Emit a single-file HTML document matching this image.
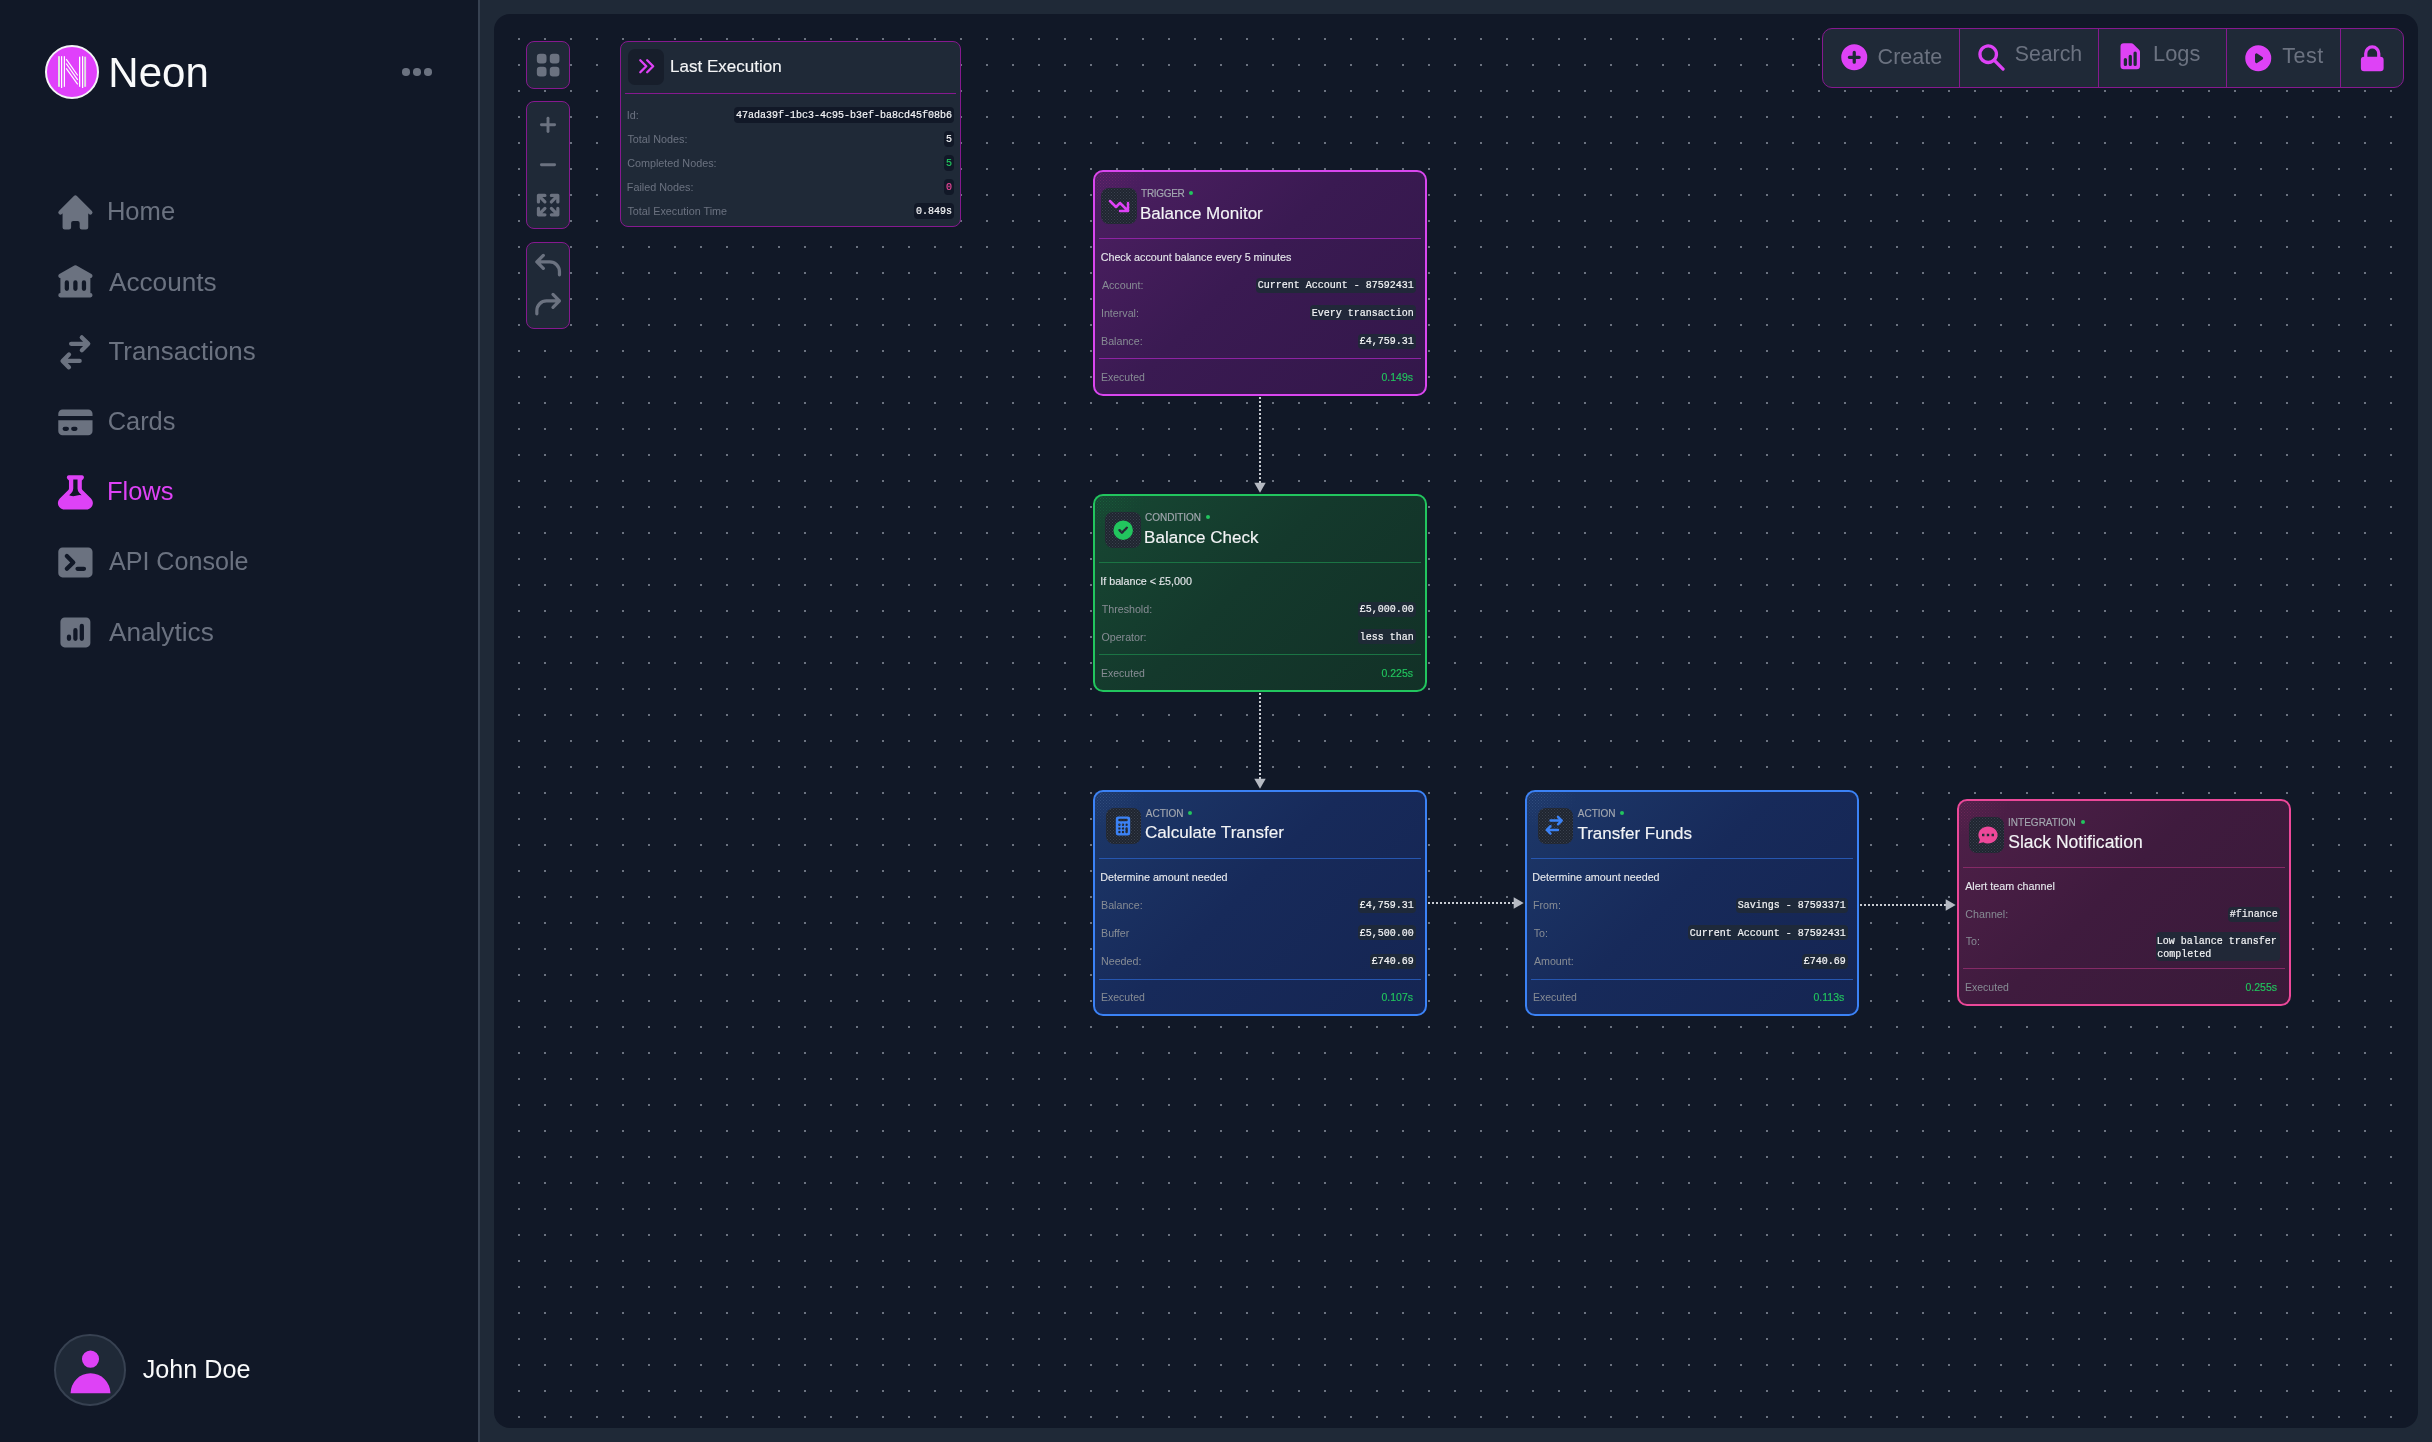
<!DOCTYPE html><html><head><meta charset="utf-8"><style>
html,body{margin:0;padding:0;width:2432px;height:1442px;overflow:hidden;background:#1f2937;}
body{position:relative;font-family:"Liberation Sans",sans-serif;}
#root{position:absolute;left:0;top:0;width:2432px;height:1442px;will-change:transform;}
.t{position:absolute;white-space:pre;}
</style></head><body><div id="root">
<div style="position:absolute;left:0px;top:0px;width:480px;height:1442px;box-sizing:border-box;background:#111827;border-right:2px solid #374151;"></div>
<div style="position:absolute;left:45px;top:45px;width:54px;height:54px;box-sizing:border-box;border-radius:50%;background:#e040fb;border:2px solid #f3f4f6;"></div>
<svg style="position:absolute;left:45px;top:45px" width="54" height="54" viewBox="0 0 54 54"><g fill="#ffffff"><rect x="13" y="11.2" width="2" height="30.6" fill="#dfe3e1"/><rect x="16" y="11.2" width="1.2" height="31.8"/><rect x="18.8" y="11.2" width="1.2" height="30.6"/><rect x="34" y="11.7" width="1.3" height="30.1"/><rect x="37" y="11.2" width="1.2" height="31.8"/><rect x="39.2" y="11.7" width="1.9" height="30.1" fill="#dfe3e1"/></g><g stroke="#ffffff" stroke-width="1.2"><line x1="21.2" y1="14.1" x2="32.7" y2="30.5"/><line x1="21.2" y1="18.5" x2="32.7" y2="34.9"/><line x1="21.2" y1="23.4" x2="32.7" y2="39.4"/></g></svg>
<div class="t" style="left:108.35px;top:52.13px;font-size:42px;line-height:42px;color:#f9fafb;font-weight:400;font-family:'Liberation Sans', sans-serif;">Neon</div>
<div style="position:absolute;left:402.25px;top:68.25px;width:7.5px;height:7.5px;box-sizing:border-box;border-radius:50%;background:#6b7280;"></div>
<div style="position:absolute;left:413.25px;top:68.25px;width:7.5px;height:7.5px;box-sizing:border-box;border-radius:50%;background:#6b7280;"></div>
<div style="position:absolute;left:424.25px;top:68.25px;width:7.5px;height:7.5px;box-sizing:border-box;border-radius:50%;background:#6b7280;"></div>
<svg style="position:absolute;left:53.60px;top:191.30px;" width="42.80" height="42.80" viewBox="0 0 20 20" fill="#6b7280"><path fill-rule="evenodd" clip-rule="evenodd" d="M10.707 2.293a1 1 0 00-1.414 0l-7 7a1 1 0 001.414 1.414L4 10.414V17a1 1 0 001 1h2a1 1 0 001-1v-2a1 1 0 011-1h2a1 1 0 011 1v2a1 1 0 001 1h2a1 1 0 001-1v-6.586l.293.293a1 1 0 001.414-1.414l-7-7z"/></svg>
<div class="t" style="left:106.90px;top:199.02px;font-size:25.6px;line-height:25.6px;color:#6b7280;font-weight:400;font-family:'Liberation Sans', sans-serif;">Home</div>
<svg style="position:absolute;left:53.60px;top:261.30px;" width="42.80" height="42.80" viewBox="0 0 20 20" fill="#6b7280"><path fill-rule="evenodd" clip-rule="evenodd" d="M10.496 2.132a1 1 0 00-.992 0l-7 4A1 1 0 003 8v7a1 1 0 100 2h14a1 1 0 100-2V8a1 1 0 00.496-1.868l-7-4zM6 9a1 1 0 00-1 1v3a1 1 0 102 0v-3a1 1 0 00-1-1zm3 1a1 1 0 012 0v3a1 1 0 11-2 0v-3zm5-1a1 1 0 00-1 1v3a1 1 0 102 0v-3a1 1 0 00-1-1z"/></svg>
<div class="t" style="left:108.95px;top:268.51px;font-size:26.2px;line-height:26.2px;color:#6b7280;font-weight:400;font-family:'Liberation Sans', sans-serif;">Accounts</div>
<svg style="position:absolute;left:53.60px;top:331.30px;" width="42.80" height="42.80" viewBox="0 0 20 20" fill="#6b7280"><path fill-rule="evenodd" clip-rule="evenodd" d="M8 5a1 1 0 100 2h5.586l-1.293 1.293a1 1 0 001.414 1.414l3-3a1 1 0 000-1.414l-3-3a1 1 0 10-1.414 1.414L13.586 5H8zM12 15a1 1 0 100-2H6.414l1.293-1.293a1 1 0 10-1.414-1.414l-3 3a1 1 0 000 1.414l3 3a1 1 0 001.414-1.414L6.414 15H12z"/></svg>
<div class="t" style="left:108.42px;top:338.77px;font-size:25.9px;line-height:25.9px;color:#6b7280;font-weight:400;font-family:'Liberation Sans', sans-serif;">Transactions</div>
<svg style="position:absolute;left:53.60px;top:401.30px;" width="42.80" height="42.80" viewBox="0 0 20 20" fill="#6b7280"><path fill-rule="evenodd" clip-rule="evenodd" d="M4 4a2 2 0 00-2 2v1h16V6a2 2 0 00-2-2H4zM18 9H2v5a2 2 0 002 2h12a2 2 0 002-2V9zM4 13a1 1 0 011-1h1a1 1 0 110 2H5a1 1 0 01-1-1zm5-1a1 1 0 100 2h1a1 1 0 100-2H9z"/></svg>
<div class="t" style="left:107.71px;top:409.19px;font-size:25.4px;line-height:25.4px;color:#6b7280;font-weight:400;font-family:'Liberation Sans', sans-serif;">Cards</div>
<svg style="position:absolute;left:53.60px;top:471.30px;" width="42.80" height="42.80" viewBox="0 0 20 20" fill="#de42f6"><path fill-rule="evenodd" clip-rule="evenodd" d="M7 2a1 1 0 00-.707 1.707L7 4.414v3.758a1 1 0 01-.293.707l-4 4C.817 14.769 2.156 18 4.828 18h10.343c2.673 0 4.012-3.231 2.122-5.121l-4-4A1 1 0 0113 8.172V4.414l.707-.707A1 1 0 0013 2H7zm2 6.172V4h2v4.172a3 3 0 00.879 2.12l1.027 1.028a4 4 0 00-2.171.102l-.47.156a4 4 0 01-2.53 0l-.563-.187a1.993 1.993 0 00-.114-.035l1.063-1.063A3 3 0 009 8.172z"/></svg>
<div class="t" style="left:106.91px;top:479.11px;font-size:25.5px;line-height:25.5px;color:#de42f6;font-weight:400;font-family:'Liberation Sans', sans-serif;">Flows</div>
<svg style="position:absolute;left:53.60px;top:541.30px;" width="42.80" height="42.80" viewBox="0 0 20 20" fill="#6b7280"><path fill-rule="evenodd" clip-rule="evenodd" d="M2 5a2 2 0 012-2h12a2 2 0 012 2v10a2 2 0 01-2 2H4a2 2 0 01-2-2V5zm3.293 1.293a1 1 0 011.414 0l3 3a1 1 0 010 1.414l-3 3a1 1 0 01-1.414-1.414L7.586 10 5.293 7.707a1 1 0 010-1.414zM11 12a1 1 0 100 2h3a1 1 0 100-2h-3z"/></svg>
<div class="t" style="left:108.95px;top:549.45px;font-size:25.1px;line-height:25.1px;color:#6b7280;font-weight:400;font-family:'Liberation Sans', sans-serif;">API Console</div>
<svg style="position:absolute;left:53.60px;top:611.30px;" width="42.80" height="42.80" viewBox="0 0 20 20" fill="#6b7280"><path fill-rule="evenodd" clip-rule="evenodd" d="M5 3a2 2 0 00-2 2v10a2 2 0 002 2h10a2 2 0 002-2V5a2 2 0 00-2-2H5zm9 4a1 1 0 10-2 0v6a1 1 0 102 0V7zm-3 2a1 1 0 10-2 0v4a1 1 0 102 0V9zm-3 3a1 1 0 10-2 0v1a1 1 0 102 0v-1z"/></svg>
<div class="t" style="left:108.95px;top:618.51px;font-size:26.2px;line-height:26.2px;color:#6b7280;font-weight:400;font-family:'Liberation Sans', sans-serif;">Analytics</div>
<div style="position:absolute;left:54.3px;top:1334.3px;width:71.5px;height:71.5px;box-sizing:border-box;border-radius:50%;background:#1f2937;border:2px solid #374151;"></div>
<svg style="position:absolute;left:61.50px;top:1341.50px;" width="57.00" height="57.00" viewBox="0 0 20 20" fill="#de42f6"><path fill-rule="evenodd" clip-rule="evenodd" d="M10 9a3 3 0 100-6 3 3 0 000 6zm-7 9a7 7 0 1114 0H3z"/></svg>
<div class="t" style="left:142.71px;top:1356.56px;font-size:25.2px;line-height:25.2px;color:#f9fafb;font-weight:400;font-family:'Liberation Sans', sans-serif;">John Doe</div>
<div style="position:absolute;left:494px;top:14px;width:1924px;height:1414px;border-radius:16px;background:#111827;overflow:hidden"><svg width="1922" height="1414" style="position:absolute;left:0;top:0"><defs><pattern id="dots" x="0" y="0" width="26" height="26" patternUnits="userSpaceOnUse"><rect x="24" y="24" width="2" height="2" fill="#6b7280"/></pattern></defs><rect width="1922" height="1414" fill="url(#dots)"/></svg></div>
<div style="position:absolute;left:526px;top:41px;width:44px;height:48px;box-sizing:border-box;background:#1f2937;border:1.3px solid #86198f;border-radius:8px;"></div>
<svg style="position:absolute;left:531.85px;top:49.05px;" width="32.30" height="32.30" viewBox="0 0 20 20" fill="#6b7280"><path fill-rule="evenodd" clip-rule="evenodd" d="M5 3a2 2 0 00-2 2v2a2 2 0 002 2h2a2 2 0 002-2V5a2 2 0 00-2-2H5zM5 11a2 2 0 00-2 2v2a2 2 0 002 2h2a2 2 0 002-2v-2a2 2 0 00-2-2H5zM11 5a2 2 0 012-2h2a2 2 0 012 2v2a2 2 0 01-2 2h-2a2 2 0 01-2-2V5zM11 13a2 2 0 012-2h2a2 2 0 012 2v2a2 2 0 01-2 2h-2a2 2 0 01-2-2v-2z"/></svg>
<div style="position:absolute;left:526px;top:101px;width:44px;height:128px;box-sizing:border-box;background:#1f2937;border:1.3px solid #86198f;border-radius:8px;"></div>
<svg style="position:absolute;left:530px;top:110px" width="36" height="70" viewBox="530 110 36 70" stroke="#6b7280" stroke-width="2.9" stroke-linecap="round" fill="none"><line x1="541.4" y1="124.8" x2="554.6" y2="124.8"/><line x1="548" y1="118.2" x2="548" y2="131.5"/><line x1="541.4" y1="164.8" x2="554.6" y2="164.8"/></svg>
<svg style="position:absolute;left:531.85px;top:188.85px;" width="32.30" height="32.30" viewBox="0 0 20 20" fill="#6b7280"><path fill-rule="evenodd" clip-rule="evenodd" d="M3 4a1 1 0 011-1h4a1 1 0 010 2H6.414l2.293 2.293a1 1 0 01-1.414 1.414L5 6.414V8a1 1 0 01-2 0V4zm9 1a1 1 0 110-2h4a1 1 0 011 1v4a1 1 0 11-2 0V6.414l-2.293 2.293a1 1 0 11-1.414-1.414L13.586 5H12zm-9 7a1 1 0 112 0v1.586l2.293-2.293a1 1 0 011.414 1.414L6.414 15H8a1 1 0 110 2H4a1 1 0 01-1-1v-4zm13-1a1 1 0 011 1v4a1 1 0 01-1 1h-4a1 1 0 110-2h1.586l-2.293-2.293a1 1 0 011.414-1.414L15 13.586V12a1 1 0 011-1z"/></svg>
<div style="position:absolute;left:526px;top:241.5px;width:44px;height:87px;box-sizing:border-box;background:#1f2937;border:1.3px solid #86198f;border-radius:8px;"></div>
<svg style="position:absolute;left:531.85px;top:248.85px;" width="32.30" height="32.30" viewBox="0 0 20 20" fill="#6b7280"><path fill-rule="evenodd" clip-rule="evenodd" d="M7.707 3.293a1 1 0 010 1.414L5.414 7H11a7 7 0 017 7v2a1 1 0 11-2 0v-2a5 5 0 00-5-5H5.414l2.293 2.293a1 1 0 11-1.414 1.414l-4-4a1 1 0 010-1.414l4-4a1 1 0 011.414 0z"/></svg>
<svg style="position:absolute;left:531.85px;top:288.45px;transform:scaleX(-1);" width="32.30" height="32.30" viewBox="0 0 20 20" fill="#6b7280"><path fill-rule="evenodd" clip-rule="evenodd" d="M7.707 3.293a1 1 0 010 1.414L5.414 7H11a7 7 0 017 7v2a1 1 0 11-2 0v-2a5 5 0 00-5-5H5.414l2.293 2.293a1 1 0 11-1.414 1.414l-4-4a1 1 0 010-1.414l4-4a1 1 0 011.414 0z"/></svg>
<div style="position:absolute;left:620px;top:41px;width:341px;height:186px;box-sizing:border-box;background:#1f2937;border:1.3px solid #86198f;border-radius:8px;"></div>
<div style="position:absolute;left:628px;top:49px;width:35.5px;height:35.5px;box-sizing:border-box;background:#171e2b;border-radius:7px;"></div>
<svg style="position:absolute;left:635.70px;top:56.30px" width="20.60" height="20.60" viewBox="0 0 24 24" fill="none" stroke="#de42f6" stroke-width="2.7" stroke-linecap="round" stroke-linejoin="round"><path d="M13 5l7 7-7 7M5 5l7 7-7 7"/></svg>
<div class="t" style="left:670.11px;top:57.60px;font-size:17px;line-height:17px;color:#f3f4f6;font-weight:400;font-family:'Liberation Sans', sans-serif;-webkit-text-stroke:0.15px #f3f4f6;">Last Execution</div>
<div style="position:absolute;left:625px;top:93px;width:331px;height:1px;box-sizing:border-box;background:#86198f;"></div>
<div class="t" style="left:626.70px;top:110.15px;font-size:10.8px;line-height:10.8px;color:#6b7280;font-weight:400;font-family:'Liberation Sans', sans-serif;">Id:</div>
<div style="position:absolute;left:734.2px;top:107.3px;width:219.5px;height:15.5px;box-sizing:border-box;background:#111827;border-radius:4px;"></div>
<div class="t" style="left:735.91px;top:111.14px;font-size:10px;line-height:10px;color:#f3f4f6;font-weight:400;font-family:'Liberation Mono', monospace;-webkit-text-stroke:0.2px #f3f4f6;">47ada39f-1bc3-4c95-b3ef-ba8cd45f08b6</div>
<div class="t" style="left:627.46px;top:134.15px;font-size:10.8px;line-height:10.8px;color:#6b7280;font-weight:400;font-family:'Liberation Sans', sans-serif;">Total Nodes:</div>
<div style="position:absolute;left:944.2px;top:131.3px;width:9.5px;height:15.5px;box-sizing:border-box;background:#111827;border-radius:4px;"></div>
<div class="t" style="left:945.95px;top:135.14px;font-size:10px;line-height:10px;color:#f3f4f6;font-weight:400;font-family:'Liberation Mono', monospace;-webkit-text-stroke:0.2px #f3f4f6;">5</div>
<div class="t" style="left:627.15px;top:158.15px;font-size:10.8px;line-height:10.8px;color:#6b7280;font-weight:400;font-family:'Liberation Sans', sans-serif;">Completed Nodes:</div>
<div style="position:absolute;left:944.2px;top:155.3px;width:9.5px;height:15.5px;box-sizing:border-box;background:#111827;border-radius:4px;"></div>
<div class="t" style="left:945.95px;top:159.14px;font-size:10px;line-height:10px;color:#22c55e;font-weight:400;font-family:'Liberation Mono', monospace;-webkit-text-stroke:0.2px #22c55e;">5</div>
<div class="t" style="left:626.81px;top:182.15px;font-size:10.8px;line-height:10.8px;color:#6b7280;font-weight:400;font-family:'Liberation Sans', sans-serif;">Failed Nodes:</div>
<div style="position:absolute;left:944.2px;top:179.3px;width:9.5px;height:15.5px;box-sizing:border-box;background:#111827;border-radius:4px;"></div>
<div class="t" style="left:945.95px;top:183.14px;font-size:10px;line-height:10px;color:#ec4899;font-weight:400;font-family:'Liberation Mono', monospace;-webkit-text-stroke:0.2px #ec4899;">0</div>
<div class="t" style="left:627.46px;top:206.15px;font-size:10.8px;line-height:10.8px;color:#6b7280;font-weight:400;font-family:'Liberation Sans', sans-serif;">Total Execution Time</div>
<div style="position:absolute;left:914.2px;top:203.3px;width:39.5px;height:15.5px;box-sizing:border-box;background:#111827;border-radius:4px;"></div>
<div class="t" style="left:915.94px;top:207.14px;font-size:10px;line-height:10px;color:#f3f4f6;font-weight:400;font-family:'Liberation Mono', monospace;-webkit-text-stroke:0.2px #f3f4f6;">0.849s</div>
<div style="position:absolute;left:1822px;top:28px;width:582px;height:60px;box-sizing:border-box;background:#1f2937;border:1.3px solid #86198f;border-radius:10px;"></div>
<div style="position:absolute;left:1958.7px;top:28px;width:1.2px;height:60px;box-sizing:border-box;background:#86198f;"></div>
<div style="position:absolute;left:2097.7000000000003px;top:28px;width:1.2px;height:60px;box-sizing:border-box;background:#86198f;"></div>
<div style="position:absolute;left:2225.9px;top:28px;width:1.2px;height:60px;box-sizing:border-box;background:#86198f;"></div>
<div style="position:absolute;left:2339.9px;top:28px;width:1.2px;height:60px;box-sizing:border-box;background:#86198f;"></div>
<svg style="position:absolute;left:1837.75px;top:41.45px;" width="32.50" height="32.50" viewBox="0 0 20 20" fill="#de42f6"><path fill-rule="evenodd" clip-rule="evenodd" d="M10 18a8 8 0 100-16 8 8 0 000 16zm1-11a1 1 0 10-2 0v2H7a1 1 0 100 2h2v2a1 1 0 102 0v-2h2a1 1 0 100-2h-2V7z"/></svg>
<div class="t" style="left:1877.61px;top:46.99px;font-size:21.5px;line-height:21.5px;color:#6b7280;font-weight:400;font-family:'Liberation Sans', sans-serif;">Create</div>
<svg style="position:absolute;left:1974.50px;top:41.20px;" width="33.00" height="33.00" viewBox="0 0 20 20" fill="#de42f6"><path fill-rule="evenodd" clip-rule="evenodd" d="M8 4a4 4 0 100 8 4 4 0 000-8zM2 8a6 6 0 1110.89 3.476l4.817 4.817a1 1 0 01-1.414 1.414l-4.816-4.816A6 6 0 012 8z"/></svg>
<div class="t" style="left:2014.73px;top:43.56px;font-size:21.3px;line-height:21.3px;color:#6b7280;font-weight:400;font-family:'Liberation Sans', sans-serif;">Search</div>
<svg style="position:absolute;left:2113.85px;top:39.65px;" width="32.50" height="32.50" viewBox="0 0 20 20" fill="#de42f6"><path fill-rule="evenodd" clip-rule="evenodd" d="M6 2a2 2 0 00-2 2v12a2 2 0 002 2h8a2 2 0 002-2V7.414A2 2 0 0015.414 6L12 2.586A2 2 0 0010.586 2H6zm2 10a1 1 0 10-2 0v3a1 1 0 102 0v-3zm2-3a1 1 0 011 1v5a1 1 0 11-2 0v-5a1 1 0 011-1zm4-1a1 1 0 10-2 0v7a1 1 0 102 0V8z"/></svg>
<div class="t" style="left:2153.11px;top:42.74px;font-size:21.8px;line-height:21.8px;color:#6b7280;font-weight:400;font-family:'Liberation Sans', sans-serif;">Logs</div>
<svg style="position:absolute;left:2241.65px;top:42.05px;" width="32.50" height="32.50" viewBox="0 0 20 20" fill="#de42f6"><path fill-rule="evenodd" clip-rule="evenodd" d="M10 18a8 8 0 100-16 8 8 0 000 16zM9.555 7.168A1 1 0 008 8v4a1 1 0 001.555.832l3-2a1 1 0 000-1.664l-3-2z"/></svg>
<div class="t" style="left:2282.32px;top:46.39px;font-size:21.5px;line-height:21.5px;color:#6b7280;font-weight:400;font-family:'Liberation Sans', sans-serif;letter-spacing:0.5px;">Test</div>
<svg style="position:absolute;left:2355.75px;top:41.85px;" width="32.50" height="32.50" viewBox="0 0 20 20" fill="#de42f6"><path fill-rule="evenodd" clip-rule="evenodd" d="M5 9V7a5 5 0 0110 0v2a2 2 0 012 2v5a2 2 0 01-2 2H5a2 2 0 01-2-2v-5a2 2 0 012-2zm8-2v2H7V7a3 3 0 016 0z"/></svg>
<svg style="position:absolute;left:1254px;top:396px" width="12" height="98" viewBox="0 0 12 98"><line x1="6" y1="1" x2="6" y2="88" stroke="#c9ccd3" stroke-width="2" stroke-dasharray="2 2"/><path d="M0.3 86.7 L11.7 86.7 L6 96.8 Z" fill="#b6bac3"/></svg>
<svg style="position:absolute;left:1254px;top:692px" width="12" height="98" viewBox="0 0 12 98"><line x1="6" y1="1" x2="6" y2="88" stroke="#c9ccd3" stroke-width="2" stroke-dasharray="2 2"/><path d="M0.3 86.7 L11.7 86.7 L6 96.8 Z" fill="#b6bac3"/></svg>
<svg style="position:absolute;left:1427px;top:897px" width="98" height="12" viewBox="0 0 98 12"><line x1="1" y1="6" x2="88" y2="6" stroke="#c9ccd3" stroke-width="2" stroke-dasharray="2 2"/><path d="M86.7 0.3 L86.7 11.7 L96.7 6 Z" fill="#b6bac3"/></svg>
<svg style="position:absolute;left:1859px;top:899px" width="98" height="12" viewBox="0 0 98 12"><line x1="1" y1="6" x2="88" y2="6" stroke="#c9ccd3" stroke-width="2" stroke-dasharray="2 2"/><path d="M86.7 0.3 L86.7 11.7 L96.7 6 Z" fill="#b6bac3"/></svg>
<div style="position:absolute;left:1093px;top:170px;width:334px;height:226px;box-sizing:border-box;border:2px solid #d946ef;border-radius:10px;background:linear-gradient(135deg,#4d1f62 0%,#3a1a52 45%,#33174a 100%);"></div>
<svg style="position:absolute;left:1095px;top:172px" width="70" height="50" viewBox="0 0 70 50"><defs><pattern id="hp1093170" width="3" height="3" patternUnits="userSpaceOnUse"><circle cx="1" cy="1" r="0.55" fill="rgba(236,72,153,0.32)"/><circle cx="2.5" cy="2.5" r="0.55" fill="rgba(236,72,153,0.32)"/></pattern><radialGradient id="hg1093170" cx="0" cy="0" r="1" gradientUnits="objectBoundingBox"><stop offset="0" stop-color="#fff" stop-opacity="1"/><stop offset="0.75" stop-color="#fff" stop-opacity="0"/></radialGradient><mask id="hm1093170"><rect width="70" height="50" fill="url(#hg1093170)"/></mask></defs><rect width="70" height="50" fill="url(#hp1093170)" mask="url(#hm1093170)"/></svg>
<div style="position:absolute;left:1101px;top:188.3px;width:35.5px;height:35.5px;box-sizing:border-box;background-color:#1f2530;background-image:radial-gradient(rgba(120,130,145,0.30) 0.6px, transparent 0.9px),radial-gradient(rgba(120,130,145,0.30) 0.6px, transparent 0.9px);background-size:3px 3px;background-position:0 0,1.5px 1.5px;border-radius:8px;"></div>
<svg style="position:absolute;left:1106.75px;top:194.05px" width="24.00" height="24.00" viewBox="0 0 24 24" fill="none" stroke="#de42f6" stroke-width="2.5" stroke-linecap="round" stroke-linejoin="round"><path d="M13 17h8m0 0V9m0 8l-8-8-4 4-6-6"/></svg>
<div class="t" style="left:1141.08px;top:188.63px;font-size:10px;line-height:10px;color:#a3a8b0;font-weight:400;font-family:'Liberation Sans', sans-serif;letter-spacing:-0.3px;-webkit-text-stroke:0.15px #a3a8b0;">TRIGGER</div>
<div style="position:absolute;left:1189px;top:191px;width:4px;height:4px;box-sizing:border-box;border-radius:50%;background:#22c55e;"></div>
<div class="t" style="left:1139.91px;top:204.60px;font-size:17px;line-height:17px;color:#f3f4f6;font-weight:400;font-family:'Liberation Sans', sans-serif;-webkit-text-stroke:0.15px #f3f4f6;">Balance Monitor</div>
<div style="position:absolute;left:1099px;top:238px;width:322px;height:1px;box-sizing:border-box;background:#8e23a3;"></div>
<div class="t" style="left:1100.65px;top:251.90px;font-size:10.75px;line-height:10.75px;color:#e5e7eb;font-weight:400;font-family:'Liberation Sans', sans-serif;-webkit-text-stroke:0.12px #e5e7eb;">Check account balance every 5 minutes</div>
<div class="t" style="left:1101.88px;top:280.14px;font-size:10.7px;line-height:10.7px;color:#878c94;font-weight:400;font-family:'Liberation Sans', sans-serif;">Account:</div>
<div style="position:absolute;left:1256.1px;top:277.59999999999997px;width:159.5px;height:15px;box-sizing:border-box;background:rgba(31,41,55,0.92);border-radius:4px;"></div>
<div class="t" style="left:1257.82px;top:281.24px;font-size:10px;line-height:10px;color:#f3f4f6;font-weight:400;font-family:'Liberation Mono', monospace;-webkit-text-stroke:0.2px #f3f4f6;">Current Account - 87592431</div>
<div class="t" style="left:1100.91px;top:307.94px;font-size:10.7px;line-height:10.7px;color:#878c94;font-weight:400;font-family:'Liberation Sans', sans-serif;">Interval:</div>
<div style="position:absolute;left:1310.1px;top:305.4px;width:105.5px;height:15px;box-sizing:border-box;background:rgba(31,41,55,0.92);border-radius:4px;"></div>
<div class="t" style="left:1311.83px;top:309.04px;font-size:10px;line-height:10px;color:#f3f4f6;font-weight:400;font-family:'Liberation Mono', monospace;-webkit-text-stroke:0.2px #f3f4f6;">Every transaction</div>
<div class="t" style="left:1101.02px;top:336.14px;font-size:10.7px;line-height:10.7px;color:#878c94;font-weight:400;font-family:'Liberation Sans', sans-serif;">Balance:</div>
<div style="position:absolute;left:1358.1px;top:333.59999999999997px;width:57.5px;height:15px;box-sizing:border-box;background:rgba(31,41,55,0.92);border-radius:4px;"></div>
<div class="t" style="left:1359.84px;top:337.24px;font-size:10px;line-height:10px;color:#f3f4f6;font-weight:400;font-family:'Liberation Mono', monospace;-webkit-text-stroke:0.2px #f3f4f6;">£4,759.31</div>
<div style="position:absolute;left:1099px;top:358.2px;width:322px;height:1px;box-sizing:border-box;background:#8e23a3;"></div>
<div class="t" style="left:1101.04px;top:372.21px;font-size:10.5px;line-height:10.5px;color:#878c94;font-weight:400;font-family:'Liberation Sans', sans-serif;">Executed</div>
<div class="t" style="left:1381.47px;top:372.21px;font-size:10.5px;line-height:10.5px;color:#22c55e;font-weight:400;font-family:'Liberation Sans', sans-serif;-webkit-text-stroke:0.15px #22c55e;">0.149s</div>
<div style="position:absolute;left:1093px;top:494px;width:334px;height:198px;box-sizing:border-box;border:2px solid #22c55e;border-radius:10px;background:linear-gradient(135deg,#174733 0%,#14392c 45%,#123127 100%);"></div>
<svg style="position:absolute;left:1095px;top:496px" width="70" height="50" viewBox="0 0 70 50"><defs><pattern id="hp1093494" width="3" height="3" patternUnits="userSpaceOnUse"><circle cx="1" cy="1" r="0.55" fill="rgba(34,197,94,0.32)"/><circle cx="2.5" cy="2.5" r="0.55" fill="rgba(34,197,94,0.32)"/></pattern><radialGradient id="hg1093494" cx="0" cy="0" r="1" gradientUnits="objectBoundingBox"><stop offset="0" stop-color="#fff" stop-opacity="1"/><stop offset="0.75" stop-color="#fff" stop-opacity="0"/></radialGradient><mask id="hm1093494"><rect width="70" height="50" fill="url(#hg1093494)"/></mask></defs><rect width="70" height="50" fill="url(#hp1093494)" mask="url(#hm1093494)"/></svg>
<div style="position:absolute;left:1105.2px;top:512.3px;width:35.5px;height:35.5px;box-sizing:border-box;background-color:#1f2530;background-image:radial-gradient(rgba(120,130,145,0.30) 0.6px, transparent 0.9px),radial-gradient(rgba(120,130,145,0.30) 0.6px, transparent 0.9px);background-size:3px 3px;background-position:0 0,1.5px 1.5px;border-radius:8px;"></div>
<svg style="position:absolute;left:1110.75px;top:517.85px;" width="24.40" height="24.40" viewBox="0 0 20 20" fill="#22c55e"><path fill-rule="evenodd" clip-rule="evenodd" d="M10 18a8 8 0 100-16 8 8 0 000 16zm3.707-9.293a1 1 0 00-1.414-1.414L9 10.586 7.707 9.293a1 1 0 00-1.414 1.414l2 2a1 1 0 001.414 0l4-4z"/></svg>
<div class="t" style="left:1144.99px;top:512.63px;font-size:10px;line-height:10px;color:#a3a8b0;font-weight:400;font-family:'Liberation Sans', sans-serif;-webkit-text-stroke:0.15px #a3a8b0;">CONDITION</div>
<div style="position:absolute;left:1206px;top:515px;width:4px;height:4px;box-sizing:border-box;border-radius:50%;background:#22c55e;"></div>
<div class="t" style="left:1144.11px;top:528.60px;font-size:17px;line-height:17px;color:#f3f4f6;font-weight:400;font-family:'Liberation Sans', sans-serif;-webkit-text-stroke:0.15px #f3f4f6;">Balance Check</div>
<div style="position:absolute;left:1099px;top:562px;width:322px;height:1px;box-sizing:border-box;background:#1b7444;"></div>
<div class="t" style="left:1100.21px;top:575.90px;font-size:10.75px;line-height:10.75px;color:#e5e7eb;font-weight:400;font-family:'Liberation Sans', sans-serif;-webkit-text-stroke:0.12px #e5e7eb;">If balance &lt; £5,000</div>
<div class="t" style="left:1101.66px;top:604.04px;font-size:10.7px;line-height:10.7px;color:#878c94;font-weight:400;font-family:'Liberation Sans', sans-serif;">Threshold:</div>
<div style="position:absolute;left:1358.1px;top:601.5px;width:57.5px;height:15px;box-sizing:border-box;background:rgba(31,41,55,0.92);border-radius:4px;"></div>
<div class="t" style="left:1359.84px;top:605.14px;font-size:10px;line-height:10px;color:#f3f4f6;font-weight:400;font-family:'Liberation Mono', monospace;-webkit-text-stroke:0.2px #f3f4f6;">£5,000.00</div>
<div class="t" style="left:1101.39px;top:631.94px;font-size:10.7px;line-height:10.7px;color:#878c94;font-weight:400;font-family:'Liberation Sans', sans-serif;">Operator:</div>
<div style="position:absolute;left:1358.1px;top:629.4px;width:57.5px;height:15px;box-sizing:border-box;background:rgba(31,41,55,0.92);border-radius:4px;"></div>
<div class="t" style="left:1359.84px;top:633.04px;font-size:10px;line-height:10px;color:#f3f4f6;font-weight:400;font-family:'Liberation Mono', monospace;-webkit-text-stroke:0.2px #f3f4f6;">less than</div>
<div style="position:absolute;left:1099px;top:654.3px;width:322px;height:1px;box-sizing:border-box;background:#1b7444;"></div>
<div class="t" style="left:1101.04px;top:667.81px;font-size:10.5px;line-height:10.5px;color:#878c94;font-weight:400;font-family:'Liberation Sans', sans-serif;">Executed</div>
<div class="t" style="left:1381.47px;top:667.81px;font-size:10.5px;line-height:10.5px;color:#22c55e;font-weight:400;font-family:'Liberation Sans', sans-serif;-webkit-text-stroke:0.15px #22c55e;">0.225s</div>
<div style="position:absolute;left:1093px;top:790px;width:334px;height:226px;box-sizing:border-box;border:2px solid #3b82f6;border-radius:10px;background:linear-gradient(135deg,#1d3869 0%,#172a5a 45%,#152552 100%);"></div>
<svg style="position:absolute;left:1095px;top:792px" width="70" height="50" viewBox="0 0 70 50"><defs><pattern id="hp1093790" width="3" height="3" patternUnits="userSpaceOnUse"><circle cx="1" cy="1" r="0.55" fill="rgba(148,178,230,0.30)"/><circle cx="2.5" cy="2.5" r="0.55" fill="rgba(148,178,230,0.30)"/></pattern><radialGradient id="hg1093790" cx="0" cy="0" r="1" gradientUnits="objectBoundingBox"><stop offset="0" stop-color="#fff" stop-opacity="1"/><stop offset="0.75" stop-color="#fff" stop-opacity="0"/></radialGradient><mask id="hm1093790"><rect width="70" height="50" fill="url(#hg1093790)"/></mask></defs><rect width="70" height="50" fill="url(#hp1093790)" mask="url(#hm1093790)"/></svg>
<div style="position:absolute;left:1105.5px;top:808.3px;width:35.5px;height:35.5px;box-sizing:border-box;background-color:#1f2530;background-image:radial-gradient(rgba(120,130,145,0.30) 0.6px, transparent 0.9px),radial-gradient(rgba(120,130,145,0.30) 0.6px, transparent 0.9px);background-size:3px 3px;background-position:0 0,1.5px 1.5px;border-radius:8px;"></div>
<svg style="position:absolute;left:1111.25px;top:814.05px;" width="24.00" height="24.00" viewBox="0 0 20 20" fill="#3b82f6"><path fill-rule="evenodd" clip-rule="evenodd" d="M6 2a2 2 0 00-2 2v12a2 2 0 002 2h8a2 2 0 002-2V4a2 2 0 00-2-2H6zm1 2a1 1 0 000 2h6a1 1 0 100-2H7zm6 7a1 1 0 011 1v3a1 1 0 11-2 0v-3a1 1 0 011-1zm-3 3a1 1 0 100 2h.01a1 1 0 100-2H10zm-4 1a1 1 0 011-1h.01a1 1 0 110 2H7a1 1 0 01-1-1zm1-4a1 1 0 100 2h.01a1 1 0 100-2H7zm2 1a1 1 0 011-1h.01a1 1 0 110 2H10a1 1 0 01-1-1zm4-4a1 1 0 100 2h.01a1 1 0 100-2H13zM9 9a1 1 0 011-1h.01a1 1 0 110 2H10a1 1 0 01-1-1zM7 8a1 1 0 000 2h.01a1 1 0 000-2H7z"/></svg>
<div class="t" style="left:1145.78px;top:808.63px;font-size:10px;line-height:10px;color:#a3a8b0;font-weight:400;font-family:'Liberation Sans', sans-serif;-webkit-text-stroke:0.15px #a3a8b0;">ACTION</div>
<div style="position:absolute;left:1188.1px;top:811px;width:4px;height:4px;box-sizing:border-box;border-radius:50%;background:#22c55e;"></div>
<div class="t" style="left:1144.93px;top:824.48px;font-size:17.15px;line-height:17.15px;color:#f3f4f6;font-weight:400;font-family:'Liberation Sans', sans-serif;-webkit-text-stroke:0.15px #f3f4f6;">Calculate Transfer</div>
<div style="position:absolute;left:1099px;top:858px;width:322px;height:1px;box-sizing:border-box;background:#2656b0;"></div>
<div class="t" style="left:1100.32px;top:871.90px;font-size:10.75px;line-height:10.75px;color:#e5e7eb;font-weight:400;font-family:'Liberation Sans', sans-serif;-webkit-text-stroke:0.12px #e5e7eb;">Determine amount needed</div>
<div class="t" style="left:1101.02px;top:900.14px;font-size:10.7px;line-height:10.7px;color:#878c94;font-weight:400;font-family:'Liberation Sans', sans-serif;">Balance:</div>
<div style="position:absolute;left:1358.1px;top:897.6px;width:57.5px;height:15px;box-sizing:border-box;background:rgba(31,41,55,0.92);border-radius:4px;"></div>
<div class="t" style="left:1359.84px;top:901.24px;font-size:10px;line-height:10px;color:#f3f4f6;font-weight:400;font-family:'Liberation Mono', monospace;-webkit-text-stroke:0.2px #f3f4f6;">£4,759.31</div>
<div class="t" style="left:1101.02px;top:927.94px;font-size:10.7px;line-height:10.7px;color:#878c94;font-weight:400;font-family:'Liberation Sans', sans-serif;">Buffer</div>
<div style="position:absolute;left:1358.1px;top:925.4px;width:57.5px;height:15px;box-sizing:border-box;background:rgba(31,41,55,0.92);border-radius:4px;"></div>
<div class="t" style="left:1359.84px;top:929.04px;font-size:10px;line-height:10px;color:#f3f4f6;font-weight:400;font-family:'Liberation Mono', monospace;-webkit-text-stroke:0.2px #f3f4f6;">£5,500.00</div>
<div class="t" style="left:1101.02px;top:956.34px;font-size:10.7px;line-height:10.7px;color:#878c94;font-weight:400;font-family:'Liberation Sans', sans-serif;">Needed:</div>
<div style="position:absolute;left:1370.1px;top:953.8px;width:45.5px;height:15px;box-sizing:border-box;background:rgba(31,41,55,0.92);border-radius:4px;"></div>
<div class="t" style="left:1371.84px;top:957.44px;font-size:10px;line-height:10px;color:#f3f4f6;font-weight:400;font-family:'Liberation Mono', monospace;-webkit-text-stroke:0.2px #f3f4f6;">£740.69</div>
<div style="position:absolute;left:1099px;top:978.6px;width:322px;height:1px;box-sizing:border-box;background:#2656b0;"></div>
<div class="t" style="left:1101.04px;top:992.41px;font-size:10.5px;line-height:10.5px;color:#878c94;font-weight:400;font-family:'Liberation Sans', sans-serif;">Executed</div>
<div class="t" style="left:1381.47px;top:992.41px;font-size:10.5px;line-height:10.5px;color:#22c55e;font-weight:400;font-family:'Liberation Sans', sans-serif;-webkit-text-stroke:0.15px #22c55e;">0.107s</div>
<div style="position:absolute;left:1525px;top:790px;width:334px;height:226px;box-sizing:border-box;border:2px solid #3b82f6;border-radius:10px;background:linear-gradient(135deg,#1d3869 0%,#172a5a 45%,#152552 100%);"></div>
<svg style="position:absolute;left:1527px;top:792px" width="70" height="50" viewBox="0 0 70 50"><defs><pattern id="hp1525790" width="3" height="3" patternUnits="userSpaceOnUse"><circle cx="1" cy="1" r="0.55" fill="rgba(148,178,230,0.30)"/><circle cx="2.5" cy="2.5" r="0.55" fill="rgba(148,178,230,0.30)"/></pattern><radialGradient id="hg1525790" cx="0" cy="0" r="1" gradientUnits="objectBoundingBox"><stop offset="0" stop-color="#fff" stop-opacity="1"/><stop offset="0.75" stop-color="#fff" stop-opacity="0"/></radialGradient><mask id="hm1525790"><rect width="70" height="50" fill="url(#hg1525790)"/></mask></defs><rect width="70" height="50" fill="url(#hp1525790)" mask="url(#hm1525790)"/></svg>
<div style="position:absolute;left:1537.5px;top:808.3px;width:35.5px;height:35.5px;box-sizing:border-box;background-color:#1f2530;background-image:radial-gradient(rgba(120,130,145,0.30) 0.6px, transparent 0.9px),radial-gradient(rgba(120,130,145,0.30) 0.6px, transparent 0.9px);background-size:3px 3px;background-position:0 0,1.5px 1.5px;border-radius:8px;"></div>
<svg style="position:absolute;left:1543.25px;top:813.75px" width="22.50" height="22.50" viewBox="0 0 24 24" fill="none" stroke="#3b82f6" stroke-width="2.55" stroke-linecap="round" stroke-linejoin="round"><path d="M8 7h12m0 0l-4-4m4 4l-4 4m0 6H4m0 0l4 4m-4-4l4-4"/></svg>
<div class="t" style="left:1577.78px;top:808.63px;font-size:10px;line-height:10px;color:#a3a8b0;font-weight:400;font-family:'Liberation Sans', sans-serif;-webkit-text-stroke:0.15px #a3a8b0;">ACTION</div>
<div style="position:absolute;left:1620.1px;top:811px;width:4px;height:4px;box-sizing:border-box;border-radius:50%;background:#22c55e;"></div>
<div class="t" style="left:1577.42px;top:824.60px;font-size:17px;line-height:17px;color:#f3f4f6;font-weight:400;font-family:'Liberation Sans', sans-serif;-webkit-text-stroke:0.15px #f3f4f6;">Transfer Funds</div>
<div style="position:absolute;left:1531px;top:858px;width:322px;height:1px;box-sizing:border-box;background:#2656b0;"></div>
<div class="t" style="left:1532.32px;top:871.90px;font-size:10.75px;line-height:10.75px;color:#e5e7eb;font-weight:400;font-family:'Liberation Sans', sans-serif;-webkit-text-stroke:0.12px #e5e7eb;">Determine amount needed</div>
<div class="t" style="left:1533.02px;top:900.14px;font-size:10.7px;line-height:10.7px;color:#878c94;font-weight:400;font-family:'Liberation Sans', sans-serif;">From:</div>
<div style="position:absolute;left:1736.1px;top:897.6px;width:111.5px;height:15px;box-sizing:border-box;background:rgba(31,41,55,0.92);border-radius:4px;"></div>
<div class="t" style="left:1737.83px;top:901.24px;font-size:10px;line-height:10px;color:#f3f4f6;font-weight:400;font-family:'Liberation Mono', monospace;-webkit-text-stroke:0.2px #f3f4f6;">Savings - 87593371</div>
<div class="t" style="left:1533.66px;top:927.94px;font-size:10.7px;line-height:10.7px;color:#878c94;font-weight:400;font-family:'Liberation Sans', sans-serif;">To:</div>
<div style="position:absolute;left:1688.1px;top:925.4px;width:159.5px;height:15px;box-sizing:border-box;background:rgba(31,41,55,0.92);border-radius:4px;"></div>
<div class="t" style="left:1689.82px;top:929.04px;font-size:10px;line-height:10px;color:#f3f4f6;font-weight:400;font-family:'Liberation Mono', monospace;-webkit-text-stroke:0.2px #f3f4f6;">Current Account - 87592431</div>
<div class="t" style="left:1533.88px;top:956.34px;font-size:10.7px;line-height:10.7px;color:#878c94;font-weight:400;font-family:'Liberation Sans', sans-serif;">Amount:</div>
<div style="position:absolute;left:1802.1px;top:953.8px;width:45.5px;height:15px;box-sizing:border-box;background:rgba(31,41,55,0.92);border-radius:4px;"></div>
<div class="t" style="left:1803.84px;top:957.44px;font-size:10px;line-height:10px;color:#f3f4f6;font-weight:400;font-family:'Liberation Mono', monospace;-webkit-text-stroke:0.2px #f3f4f6;">£740.69</div>
<div style="position:absolute;left:1531px;top:978.6px;width:322px;height:1px;box-sizing:border-box;background:#2656b0;"></div>
<div class="t" style="left:1533.04px;top:992.41px;font-size:10.5px;line-height:10.5px;color:#878c94;font-weight:400;font-family:'Liberation Sans', sans-serif;">Executed</div>
<div class="t" style="left:1813.47px;top:992.41px;font-size:10.5px;line-height:10.5px;color:#22c55e;font-weight:400;font-family:'Liberation Sans', sans-serif;-webkit-text-stroke:0.15px #22c55e;">0.113s</div>
<div style="position:absolute;left:1957px;top:799px;width:334px;height:207px;box-sizing:border-box;border:2px solid #ec4899;border-radius:10px;background:linear-gradient(135deg,#4f2049 0%,#3f1b3e 45%,#391a39 100%);"></div>
<svg style="position:absolute;left:1959px;top:801px" width="70" height="50" viewBox="0 0 70 50"><defs><pattern id="hp1957799" width="3" height="3" patternUnits="userSpaceOnUse"><circle cx="1" cy="1" r="0.55" fill="rgba(236,72,153,0.32)"/><circle cx="2.5" cy="2.5" r="0.55" fill="rgba(236,72,153,0.32)"/></pattern><radialGradient id="hg1957799" cx="0" cy="0" r="1" gradientUnits="objectBoundingBox"><stop offset="0" stop-color="#fff" stop-opacity="1"/><stop offset="0.75" stop-color="#fff" stop-opacity="0"/></radialGradient><mask id="hm1957799"><rect width="70" height="50" fill="url(#hg1957799)"/></mask></defs><rect width="70" height="50" fill="url(#hp1957799)" mask="url(#hm1957799)"/></svg>
<div style="position:absolute;left:1968.7px;top:817.3px;width:35.5px;height:35.5px;box-sizing:border-box;background-color:#1f2530;background-image:radial-gradient(rgba(120,130,145,0.30) 0.6px, transparent 0.9px),radial-gradient(rgba(120,130,145,0.30) 0.6px, transparent 0.9px);background-size:3px 3px;background-position:0 0,1.5px 1.5px;border-radius:8px;"></div>
<svg style="position:absolute;left:1975.65px;top:823.05px;" width="24.00" height="24.00" viewBox="0 0 20 20" fill="#ec4899"><path fill-rule="evenodd" clip-rule="evenodd" d="M18 10c0 3.866-3.582 7-8 7a8.841 8.841 0 01-4.083-.98L2 17l1.338-3.123C2.493 12.767 2 11.434 2 10c0-3.866 3.582-7 8-7s8 3.134 8 7zM7 9H5v2h2V9zm8 0h-2v2h2V9zM9 9h2v2H9V9z"/></svg>
<div class="t" style="left:2008.08px;top:817.63px;font-size:10px;line-height:10px;color:#a3a8b0;font-weight:400;font-family:'Liberation Sans', sans-serif;-webkit-text-stroke:0.15px #a3a8b0;">INTEGRATION</div>
<div style="position:absolute;left:2081.2px;top:820px;width:4px;height:4px;box-sizing:border-box;border-radius:50%;background:#22c55e;"></div>
<div class="t" style="left:2008.20px;top:833.84px;font-size:17.55px;line-height:17.55px;color:#f3f4f6;font-weight:400;font-family:'Liberation Sans', sans-serif;-webkit-text-stroke:0.15px #f3f4f6;">Slack Notification</div>
<div style="position:absolute;left:1963px;top:867px;width:322px;height:1px;box-sizing:border-box;background:#852a66;"></div>
<div class="t" style="left:1965.18px;top:880.90px;font-size:10.75px;line-height:10.75px;color:#e5e7eb;font-weight:400;font-family:'Liberation Sans', sans-serif;-webkit-text-stroke:0.12px #e5e7eb;">Alert team channel</div>
<div class="t" style="left:1965.36px;top:909.04px;font-size:10.7px;line-height:10.7px;color:#878c94;font-weight:400;font-family:'Liberation Sans', sans-serif;">Channel:</div>
<div style="position:absolute;left:2228.1px;top:906.5px;width:51.5px;height:15px;box-sizing:border-box;background:rgba(31,41,55,0.92);border-radius:4px;"></div>
<div class="t" style="left:2229.84px;top:910.14px;font-size:10px;line-height:10px;color:#f3f4f6;font-weight:400;font-family:'Liberation Mono', monospace;-webkit-text-stroke:0.2px #f3f4f6;">#finance</div>
<div class="t" style="left:1965.66px;top:936.44px;font-size:10.7px;line-height:10.7px;color:#878c94;font-weight:400;font-family:'Liberation Sans', sans-serif;">To:</div>
<div style="position:absolute;left:2156.1px;top:932.4px;width:123.5px;height:28.3px;box-sizing:border-box;background:rgba(31,41,55,0.92);border-radius:4px;"></div>
<div class="t" style="left:2156.69px;top:936.64px;font-size:10px;line-height:10px;color:#f3f4f6;font-weight:400;font-family:'Liberation Mono', monospace;-webkit-text-stroke:0.2px #f3f4f6;">Low balance transfer</div>
<div class="t" style="left:2157.22px;top:949.94px;font-size:10px;line-height:10px;color:#f3f4f6;font-weight:400;font-family:'Liberation Mono', monospace;-webkit-text-stroke:0.2px #f3f4f6;">completed</div>
<div style="position:absolute;left:1963px;top:968.3px;width:322px;height:1px;box-sizing:border-box;background:#852a66;"></div>
<div class="t" style="left:1965.04px;top:982.11px;font-size:10.5px;line-height:10.5px;color:#878c94;font-weight:400;font-family:'Liberation Sans', sans-serif;">Executed</div>
<div class="t" style="left:2245.47px;top:982.11px;font-size:10.5px;line-height:10.5px;color:#22c55e;font-weight:400;font-family:'Liberation Sans', sans-serif;-webkit-text-stroke:0.15px #22c55e;">0.255s</div>
</div></body></html>
